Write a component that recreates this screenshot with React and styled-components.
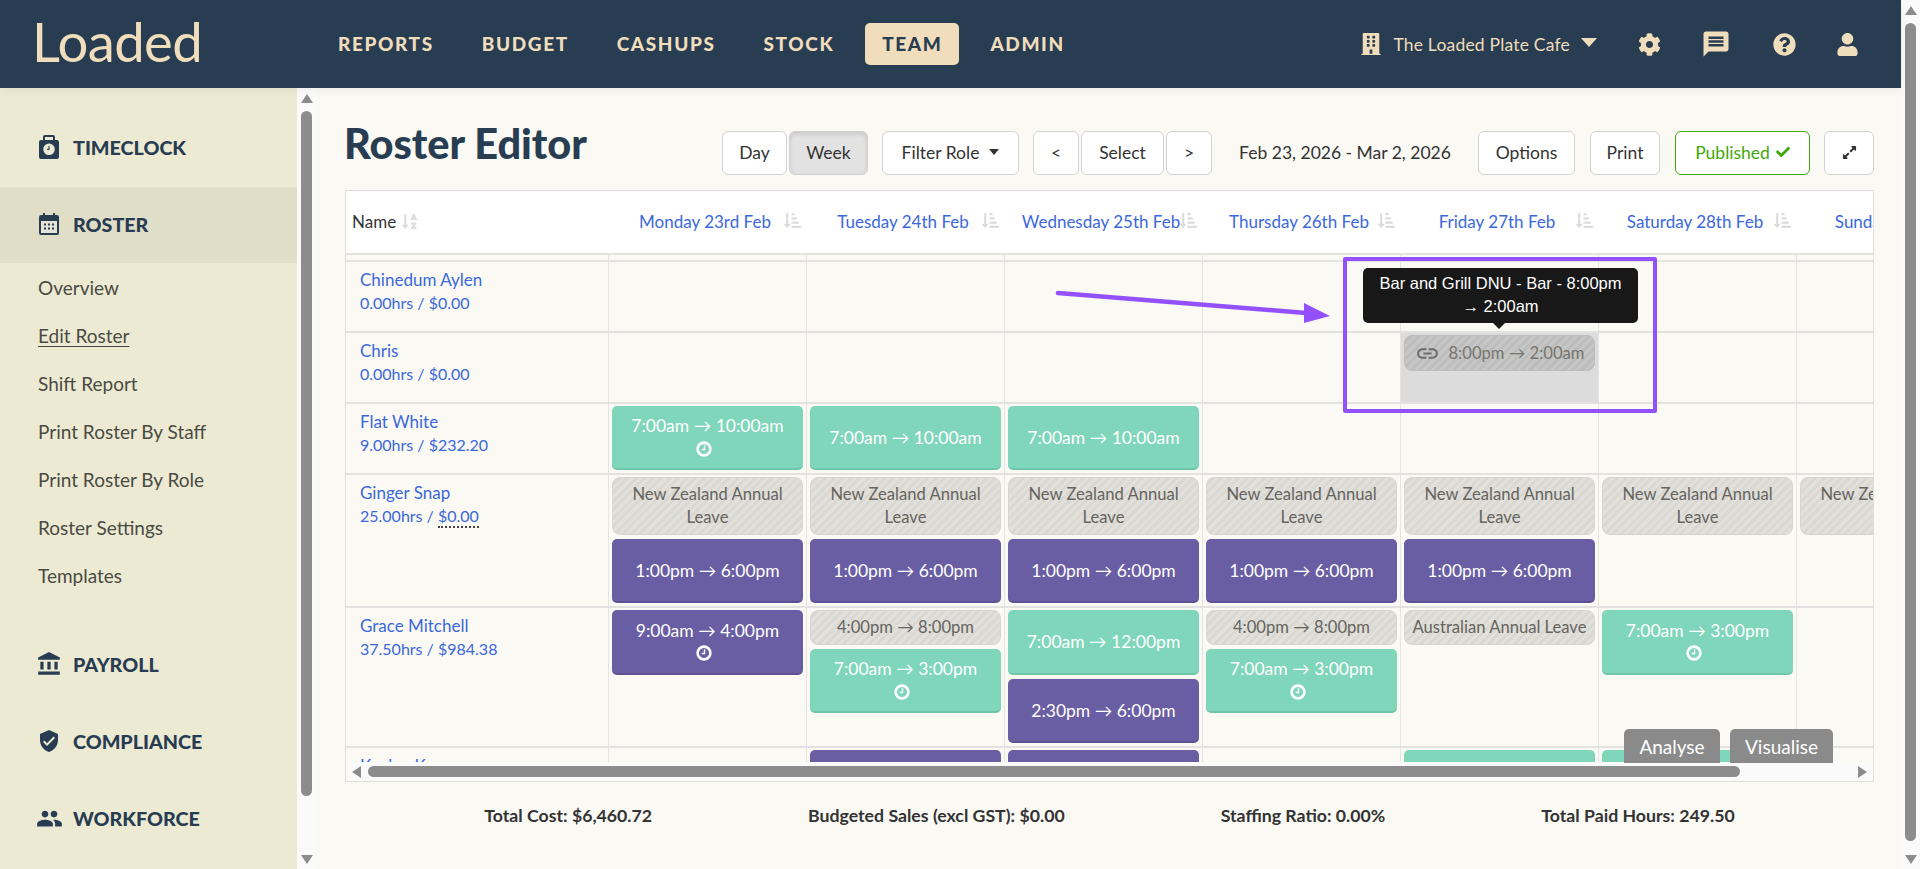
import React from 'react';
import styled, { createGlobalStyle } from 'styled-components';
import {
  FaBuilding, FaCog, FaQuestionCircle, FaUser, FaCheck, FaExpandAlt,
  FaSortAlphaDown, FaSortAmountDownAlt,
} from 'react-icons/fa';
import { MdMessage, MdAccountBalance, MdVerifiedUser, MdPeople, MdLink } from 'react-icons/md';

const NAVY = '#283c52';
const CREAM = '#efddbb';
const BLUE = '#3b68dc';

const GlobalStyle = createGlobalStyle`
  html, body { margin: 0; padding: 0; height: 100%; overflow: hidden; }
  body { font-family: Lato, "Liberation Sans", sans-serif; background: #faf9f3; color: #333; }
  * { box-sizing: border-box; }
`;

const Page = styled.div`
  display: flex;
  height: 869px;
  width: 1920px;
  overflow: hidden;
`;

const Main = styled.div`
  flex: 1;
  min-width: 0;
  display: flex;
  flex-direction: column;
`;

const Header = styled.header`
  height: 88px;
  flex: none;
  display: flex;
  align-items: center;
  background: ${NAVY};
  padding-left: 32px;
  color: ${CREAM};
  box-shadow: 0 2px 10px rgba(0, 0, 0, 0.06);
  position: relative;
  z-index: 2;
`;

const Logo = styled.div`
  font-size: 54.5px;
  font-weight: 400;
  letter-spacing: -0.6px;
  line-height: 1;
  width: 289px;
  margin-top: -6px;
`;

const Nav = styled.nav`
  display: flex;
  gap: 14px;
  align-items: center;
`;

const NavItem = styled.a`
  display: block;
  padding: 0 17px;
  line-height: 42px;
  height: 42px;
  font-size: 19px;
  font-weight: 900;
  letter-spacing: 1.6px;
  border-radius: 5px;
  color: ${(p) => (p.$active ? NAVY : CREAM)};
  background: ${(p) => (p.$active ? CREAM : 'transparent')};
`;

const HeaderRight = styled.div`
  margin-left: auto;
  display: flex;
  align-items: center;
  padding-right: 42px;
`;

const Venue = styled.div`
  display: flex;
  align-items: center;
  gap: 11px;
  font-size: 17.5px;
  letter-spacing: 0.2px;
  margin-right: 40px;
`;

const Caret = styled.span`
  display: block;
  width: 0;
  height: 0;
  border-left: 8px solid transparent;
  border-right: 8px solid transparent;
  border-top: 9px solid ${CREAM};
  margin: -4px 0 0 0;
`;

const HeaderIcon = styled.span`
  display: flex;
  width: ${(p) => p.$w}px;
  margin-left: ${(p) => p.$gap}px;
  justify-content: center;
  font-size: ${(p) => p.$size}px;
`;

const Body = styled.div`
  flex: 1;
  display: flex;
  min-height: 0;
`;

const Sidebar = styled.aside`
  width: 297px;
  flex: none;
  background: #edead3;
  padding-top: 22px;
`;

const SideItem = styled.div`
  height: 76px;
  margin-bottom: 1px;
  display: flex;
  align-items: center;
  gap: 13px;
  padding: 0 0 2px 38px;
  background: ${(p) => (p.$active ? '#e0dec6' : 'transparent')};
  color: ${NAVY};
  font-size: 19.7px;
  font-weight: 900;
`;

const SideIcon = styled.span`
  display: flex;
  flex: none;
  width: 22px;
  justify-content: center;
  font-size: ${(p) => p.$size || 22}px;

  svg { flex: none; }
`;

const SubList = styled.div`
  padding: 0 0 27px 38px;
  display: flex;
  flex-direction: column;
`;

const SubItem = styled.a`
  height: 48px;
  line-height: 47px;
  font-size: 19px;
  color: #4a4a44;
  text-decoration: ${(p) => (p.$current ? 'underline' : 'none')};
  text-underline-offset: 3px;
`;

const VTrack = styled.div`
  width: 19px;
  flex: none;
  background: #fafafa;
  display: flex;
  flex-direction: column;
  align-items: center;
  padding: ${(p) => p.$pad};
`;

const VThumb = styled.div`
  width: 11px;
  flex: 1;
  border-radius: 6px;
  background: #8c8c8c;
  margin: ${(p) => p.$margin};
`;

const ArrowUp = styled.span`
  display: block;
  width: 0;
  height: 0;
  border-left: 6px solid transparent;
  border-right: 6px solid transparent;
  border-bottom: 9px solid #8c8c8c;
`;

const ArrowDown = styled(ArrowUp)`
  border-bottom: 0;
  border-top: 9px solid #8c8c8c;
`;

const Content = styled.main`
  flex: 1;
  min-width: 0;
  position: relative;
  background: #faf9f3;
  padding: 43px 27px 0 29px;
`;

const TitleBar = styled.div`
  display: flex;
  align-items: center;
  height: 44px;
  margin-bottom: 15px;
`;

const Title = styled.h1`
  margin: 0 auto 0 0;
  font-size: 41.5px;
  line-height: 44px;
  font-weight: 900;
  color: ${NAVY};
  position: relative;
  top: -10px;
  left: -1px;
`;

const Btn = styled.button`
  height: 44px;
  width: ${(p) => p.$w}px;
  margin-left: ${(p) => p.$gap || 0}px;
  padding: 0 0 2px;
  font: inherit;
  font-size: 17.5px;
  color: ${(p) => (p.$green ? '#3fa80a' : '#333')};
  background: ${(p) => (p.$on ? '#e2e2e2' : '#fff')};
  border: 1px solid ${(p) => (p.$green ? '#3fa80a' : '#d2d2d2')};
  border-radius: 6px;
  box-shadow: ${(p) => (p.$on ? 'inset 0 2px 4px rgba(0,0,0,.12)' : 'none')};
  display: flex;
  align-items: center;
  justify-content: center;
  gap: ${(p) => p.$inner || 0}px;
`;

const SmallCaret = styled.span`
  display: block;
  width: 0;
  height: 0;
  border-left: 5px solid transparent;
  border-right: 5px solid transparent;
  border-top: 6px solid #333;
`;

const DateRange = styled.div`
  font-size: 17.5px;
  width: 266px;
  padding-bottom: 2px;
  text-align: center;
  color: #333;
`;

const Table = styled.div`
  height: 592px;
  border: 1px solid #dedede;
  display: flex;
  flex-direction: column;
  background: #faf9f3;
`;

const Viewport = styled.div`
  flex: 1;
  min-height: 0;
  overflow: hidden;
`;

const Inner = styled.div`
  width: 1650px;
`;

const Row = styled.div`
  display: grid;
  grid-template-columns: 263px repeat(7, 198px);
  border-top: ${(p) => (p.$first ? 0 : '2px solid #e2e2e0')};
  min-height: ${(p) => p.$min || 71}px;
`;

const HeadRow = styled(Row)`
  background: #fff;
  min-height: 62px;
`;

const HeadCell = styled.div`
  position: relative;
  display: flex;
  align-items: center;
  justify-content: ${(p) => (p.$name ? 'flex-start' : 'center')};
  padding: ${(p) => (p.$name ? '0 0 2px 6px' : '0 6px 2px 0')};
  font-size: 17px;
  color: ${(p) => (p.$name ? '#333' : BLUE)};
  gap: 5px;
  white-space: nowrap;
`;

const SortIcon = styled.span`
  color: #dcdcdc;
  font-size: 17px;
  display: flex;
  position: ${(p) => (p.$float ? 'absolute' : 'static')};
  right: 6px;
  top: 21px;
`;

const StubCell = styled.div`
  border-right: 1px solid #e4e4e2;
`;

const NameCell = styled(StubCell)`
  padding: 6px 0 0 14px;
  font-size: 17px;
  line-height: 23px;
  color: ${BLUE};
`;

const Hours = styled.span`
  font-size: 16px;
`;

const Dotted = styled.span`
  border-bottom: 2px dotted #444;
  padding-bottom: 1px;
`;

const DayCell = styled(StubCell)`
  padding: 2px 3px 3px;
  display: flex;
  flex-direction: column;
  gap: 4px;
  background: ${(p) => (p.$hi ? '#dcdcdc' : 'transparent')};
`;

const shiftColors = {
  teal: '#7fd6bb',
  purple: '#695ea3',
};
const shiftEdge = {
  teal: '#6ec5aa',
  purple: '#5c5294',
};

const Shift = styled.div`
  height: ${(p) => p.$h}px;
  flex: none;
  border-radius: 5px;
  background: ${(p) => shiftColors[p.$kind]};
  border-bottom: 2px solid ${(p) => shiftEdge[p.$kind]};
  color: #fff;
  font-size: 17.5px;
  line-height: 23px;
  display: flex;
  flex-direction: column;
  align-items: center;
  justify-content: center;
  text-align: center;
  white-space: nowrap;
`;

const Leave = styled.div`
  height: ${(p) => p.$h}px;
  flex: none;
  border-radius: 8px;
  border: 1px solid #d6d5cf;
  background: repeating-linear-gradient(135deg, #e1e0da 0 3px, #d9d8d2 3px 6px);
  color: #66645f;
  font-size: 16.6px;
  line-height: 23px;
  display: flex;
  align-items: center;
  justify-content: center;
  text-align: center;
  padding: 0 4px;
`;

const Linked = styled(Leave)`
  border-color: #bdbdbd;
  background: repeating-linear-gradient(135deg, #c6c6c6 0 3px, #bdbdbd 3px 6px);
  color: #77756f;
  gap: 9px;
  white-space: nowrap;
`;

const LinkIcon = styled.span`
  display: flex;
  font-size: 25px;
  color: #6e6e6e;
`;

const ClockWrap = styled.span`
  display: flex;
  margin-right: 8px;
  height: 23px;
  align-items: center;
`;

const HBar = styled.div`
  height: 19px;
  flex: none;
  background: #fafafa;
  display: flex;
  align-items: center;
  padding: 0 6px;
`;

const HThumb = styled.div`
  height: 11px;
  border-radius: 6px;
  background: #8c8c8c;
  margin: 0 auto 0 7px;
  width: 1372px;
`;

const ArrowLeft = styled.span`
  display: block;
  width: 0;
  height: 0;
  border-top: 6px solid transparent;
  border-bottom: 6px solid transparent;
  border-right: 9px solid #8c8c8c;
`;

const ArrowRight = styled.span`
  display: block;
  width: 0;
  height: 0;
  border-top: 6px solid transparent;
  border-bottom: 6px solid transparent;
  border-left: 9px solid #8c8c8c;
`;

const Totals = styled.div`
  display: flex;
  justify-content: center;
  gap: 156px;
  margin-top: 23px;
  font-size: 17.7px;
  font-weight: 700;
  color: #333;
`;

const FloatBtn = styled.div`
  position: absolute;
  top: 641px;
  left: ${(p) => p.$left}px;
  width: ${(p) => p.$w}px;
  height: 34px;
  background: #8a8a8a;
  color: #fff;
  font-size: 19px;
  border-radius: 5px 5px 0 0;
  display: flex;
  align-items: center;
  justify-content: center;
`;

const Tooltip = styled.div`
  position: absolute;
  left: 1047px;
  top: 180px;
  width: 275px;
  height: 55px;
  padding: 4px 10px;
  background: #181818;
  color: #fff;
  border-radius: 5px;
  font-family: "Liberation Sans", Arial, sans-serif;
  font-size: 16.5px;
  line-height: 23px;
  text-align: center;

  &::after {
    content: '';
    position: absolute;
    left: 130px;
    bottom: -6px;
    border-left: 6px solid transparent;
    border-right: 6px solid transparent;
    border-top: 6px solid #181818;
  }
`;

const MarkBox = styled.div`
  position: absolute;
  left: 1027px;
  top: 169px;
  width: 314px;
  height: 156px;
  border: 4px solid #9350ff;
  border-radius: 2px;
`;

const MarkArrow = styled.svg`
  position: absolute;
  left: 730px;
  top: 195px;
  width: 290px;
  height: 50px;
`;

const ClockIcon = () => (
  <svg width="16" height="16" viewBox="0 0 15 15" aria-hidden="true">
    <circle cx="7.5" cy="7.5" r="6" fill="none" stroke="#fff" strokeWidth="2.4" />
    <path d="M8 4v4H5.4" fill="none" stroke="#fff" strokeWidth="1.3" />
  </svg>
);

const TimeclockIcon = () => (
  <svg width="20" height="24" viewBox="0 0 20 24" aria-hidden="true">
    <path
      fill={NAVY}
      fillRule="evenodd"
      d="M6 0h8a2 2 0 0 1 2 2v3h2a2 2 0 0 1 2 2v15a2 2 0 0 1-2 2H2a2 2 0 0 1-2-2V7a2 2 0 0 1 2-2h2V2a2 2 0 0 1 2-2zm0 2v3h8V2H6zm4 6.5a5.8 5.8 0 1 0 0 11.6 5.8 5.8 0 0 0 0-11.6z"
    />
    <path d="M10 11v3.4h-2" fill="none" stroke={NAVY} strokeWidth="1.1" />
  </svg>
);

const CalendarIcon = () => (
  <svg width="20" height="22" viewBox="0 0 20 22" aria-hidden="true">
    <path
      fill={NAVY}
      d="M4 0h2v2h8V0h2v2h2a2 2 0 0 1 2 2v16a2 2 0 0 1-2 2H2a2 2 0 0 1-2-2V4a2 2 0 0 1 2-2h2z"
    />
    <rect x="2" y="8" width="16" height="12" fill="#e6e4d6" />
    {[5, 9, 13].map((x) =>
      [10.5, 14.5].map((y) => <rect key={`${x}-${y}`} x={x} y={y} width="2" height="2" fill={NAVY} />)
    )}
  </svg>
);

const days = [
  'Monday 23rd Feb', 'Tuesday 24th Feb', 'Wednesday 25th Feb', 'Thursday 26th Feb',
  'Friday 27th Feb', 'Saturday 28th Feb', 'Sunday 1st Mar',
];

const s = (kind, text, clock, h = 64) => ({ type: 'shift', kind, text, clock, h });
const off = (text) => ({ type: 'leave', text, h: 35 });
const nzLeave = { type: 'leave', text: 'New Zealand Annual Leave', h: 58 };
const oneToSix = s('purple', '1:00pm → 6:00pm');

const staff = [
  { name: 'Chinedum Aylen', hours: '0.00hrs / ', pay: '$0.00', cells: [] },
  {
    name: 'Chris',
    hours: '0.00hrs / ',
    pay: '$0.00',
    cells: [[], [], [], [], [{ type: 'link', text: '8:00pm → 2:00am', h: 36 }]],
    highlight: 4,
  },
  {
    name: 'Flat White',
    hours: '9.00hrs / ',
    pay: '$232.20',
    cells: [
      [s('teal', '7:00am → 10:00am', true)],
      [s('teal', '7:00am → 10:00am')],
      [s('teal', '7:00am → 10:00am')],
    ],
  },
  {
    name: 'Ginger Snap',
    hours: '25.00hrs / ',
    pay: '$0.00',
    dotted: true,
    cells: [
      [nzLeave, oneToSix], [nzLeave, oneToSix], [nzLeave, oneToSix], [nzLeave, oneToSix],
      [nzLeave, oneToSix], [nzLeave], [nzLeave],
    ],
  },
  {
    name: 'Grace Mitchell',
    hours: '37.50hrs / ',
    pay: '$984.38',
    min: 140,
    cells: [
      [s('purple', '9:00am → 4:00pm', true, 65)],
      [off('4:00pm → 8:00pm'), s('teal', '7:00am → 3:00pm', true)],
      [s('teal', '7:00am → 12:00pm', false, 65), s('purple', '2:30pm → 6:00pm')],
      [off('4:00pm → 8:00pm'), s('teal', '7:00am → 3:00pm', true)],
      [off('Australian Annual Leave')],
      [s('teal', '7:00am → 3:00pm', true, 65)],
    ],
  },
  {
    name: 'Kaylee K',
    hours: '',
    pay: '',
    cells: [
      [],
      [s('purple', '')],
      [s('purple', '')],
      [],
      [s('teal', '')],
      [s('teal', '')],
    ],
  },
];

const renderEntry = (e, i) => {
  if (e.type === 'leave') return <Leave key={i} $h={e.h}>{e.text}</Leave>;
  if (e.type === 'link') {
    return (
      <Linked key={i} $h={e.h}>
        <LinkIcon><MdLink /></LinkIcon>
        {e.text}
      </Linked>
    );
  }
  return (
    <Shift key={i} $kind={e.kind} $h={e.h}>
      {e.text}
      {e.clock && <ClockWrap><ClockIcon /></ClockWrap>}
    </Shift>
  );
};

const sideMain = [
  { label: 'TIMECLOCK', icon: <TimeclockIcon /> },
  { label: 'ROSTER', icon: <CalendarIcon />, active: true },
];
const sideLinks = ['Overview', 'Edit Roster', 'Shift Report', 'Print Roster By Staff', 'Print Roster By Role', 'Roster Settings', 'Templates'];
const sideRest = [
  { label: 'PAYROLL', icon: <MdAccountBalance />, size: 26 },
  { label: 'COMPLIANCE', icon: <MdVerifiedUser />, size: 24 },
  { label: 'WORKFORCE', icon: <MdPeople />, size: 27 },
];

const App = () => (
  <>
    <GlobalStyle />
    <Page>
      <Main>
        <Header>
          <Logo>Loaded</Logo>
          <Nav>
            <NavItem>REPORTS</NavItem>
            <NavItem>BUDGET</NavItem>
            <NavItem>CASHUPS</NavItem>
            <NavItem>STOCK</NavItem>
            <NavItem $active>TEAM</NavItem>
            <NavItem>ADMIN</NavItem>
          </Nav>
          <HeaderRight>
            <Venue>
              <FaBuilding size={22} />
              The Loaded Plate Cafe
              <Caret />
            </Venue>
            <HeaderIcon $w={24} $gap={0} $size={23}><FaCog /></HeaderIcon>
            <HeaderIcon $w={30} $gap={40} $size={32}><MdMessage /></HeaderIcon>
            <HeaderIcon $w={24} $gap={41} $size={23}><FaQuestionCircle /></HeaderIcon>
            <HeaderIcon $w={24} $gap={39} $size={23}><FaUser /></HeaderIcon>
          </HeaderRight>
        </Header>
        <Body>
          <Sidebar>
            {sideMain.map((it) => (
              <SideItem key={it.label} $active={it.active}>
                <SideIcon>{it.icon}</SideIcon>
                {it.label}
              </SideItem>
            ))}
            <SubList>
              {sideLinks.map((l) => (
                <SubItem key={l} $current={l === 'Edit Roster'}>{l}</SubItem>
              ))}
            </SubList>
            {sideRest.map((it) => (
              <SideItem key={it.label}>
                <SideIcon $size={it.size}>{it.icon}</SideIcon>
                {it.label}
              </SideItem>
            ))}
          </Sidebar>
          <VTrack $pad="6px 0 5px">
            <ArrowUp />
            <VThumb $margin="8px 0 59px" />
            <ArrowDown />
          </VTrack>
          <Content>
            <TitleBar>
              <Title>Roster Editor</Title>
              <Btn $w={65}>Day</Btn>
              <Btn $w={79} $gap={2} $on>Week</Btn>
              <Btn $w={137} $gap={14} $inner={10}>Filter Role <SmallCaret /></Btn>
              <Btn $w={46} $gap={14}>&lt;</Btn>
              <Btn $w={83} $gap={2}>Select</Btn>
              <Btn $w={46} $gap={2}>&gt;</Btn>
              <DateRange>Feb 23, 2026 - Mar 2, 2026</DateRange>
              <Btn $w={97}>Options</Btn>
              <Btn $w={70} $gap={15}>Print</Btn>
              <Btn $w={135} $gap={15} $green $inner={6}>Published <FaCheck size={14} /></Btn>
              <Btn $w={50} $gap={14}><FaExpandAlt size={15} /></Btn>
            </TitleBar>
            <Table>
              <Viewport>
                <Inner>
                  <HeadRow $first>
                    <HeadCell $name>
                      Name
                      <SortIcon><FaSortAlphaDown /></SortIcon>
                    </HeadCell>
                    {days.map((d) => (
                      <HeadCell key={d}>
                        {d}
                        <SortIcon $float><FaSortAmountDownAlt /></SortIcon>
                      </HeadCell>
                    ))}
                  </HeadRow>
                  <Row $min={7}>
                    <StubCell />
                    {days.map((d) => <StubCell key={d} />)}
                  </Row>
                  {staff.map((p) => (
                    <Row key={p.name} $min={p.min}>
                      <NameCell>
                        {p.name}
                        <br />
                        <Hours>
                          {p.hours}
                          {p.dotted ? <Dotted>{p.pay}</Dotted> : p.pay}
                        </Hours>
                      </NameCell>
                      {days.map((d, i) => (
                        <DayCell key={d} $hi={p.highlight === i}>
                          {(p.cells[i] || []).map(renderEntry)}
                        </DayCell>
                      ))}
                    </Row>
                  ))}
                </Inner>
              </Viewport>
              <HBar>
                <ArrowLeft />
                <HThumb />
                <ArrowRight />
              </HBar>
            </Table>
            <Totals>
              <span>Total Cost: $6,460.72</span>
              <span>Budgeted Sales (excl GST): $0.00</span>
              <span>Staffing Ratio: 0.00%</span>
              <span>Total Paid Hours: 249.50</span>
            </Totals>
            <FloatBtn $left={1308} $w={96}>Analyse</FloatBtn>
            <FloatBtn $left={1414} $w={103}>Visualise</FloatBtn>
            <MarkBox />
            <Tooltip>Bar and Grill DNU - Bar - 8:00pm → 2:00am</Tooltip>
            <MarkArrow viewBox="0 0 290 50">
              <path d="M12 10 L260 30" stroke="#9350ff" strokeWidth="4.5" strokeLinecap="round" />
              <path d="M258 20 L284 33 L258 40 Z" fill="#9350ff" />
            </MarkArrow>
          </Content>
        </Body>
      </Main>
      <VTrack $pad="6px 0 5px">
        <ArrowUp />
        <VThumb $margin="8px 0 14px" />
        <ArrowDown />
      </VTrack>
    </Page>
  </>
);

export default App;
